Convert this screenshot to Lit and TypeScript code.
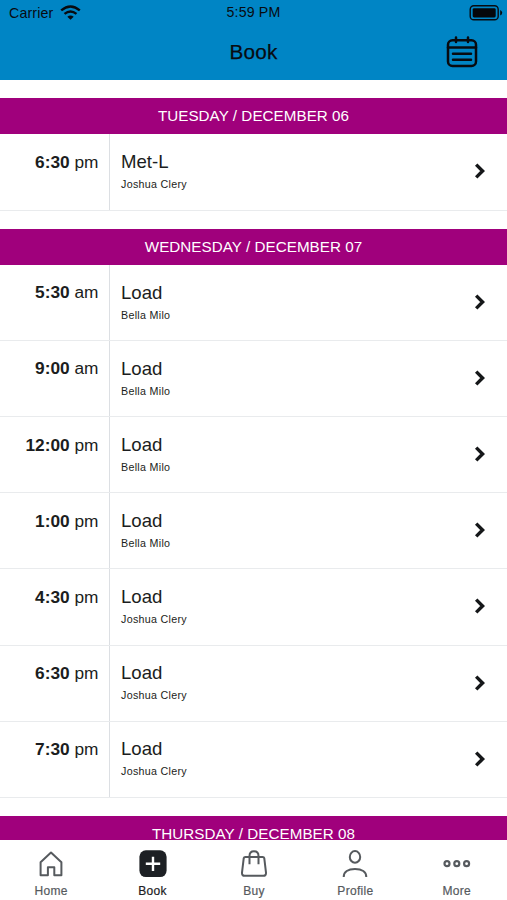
import { LitElement, html, css, svg } from "lit";
import { customElement, property } from "lit/decorators.js";

interface Slot { time: string; half: string; title: string; coach: string; }
interface Day { label: string; slots: Slot[]; }

const load = (time: string, half: string, coach: string): Slot => ({ time, half, title: "Load", coach });

const days: Day[] = [
  { label: "TUESDAY / DECEMBER 06", slots: [{ time: "6:30", half: "pm", title: "Met-L", coach: "Joshua Clery" }] },
  {
    label: "WEDNESDAY / DECEMBER 07",
    slots: [
      load("5:30", "am", "Bella Milo"),
      load("9:00", "am", "Bella Milo"),
      load("12:00", "pm", "Bella Milo"),
      load("1:00", "pm", "Bella Milo"),
      load("4:30", "pm", "Joshua Clery"),
      load("6:30", "pm", "Joshua Clery"),
      load("7:30", "pm", "Joshua Clery"),
    ],
  },
  { label: "THURSDAY / DECEMBER 08", slots: [] },
];

const tabs = [
  { label: "Home", icon: svg`<path d="M4.6 25.2V12.2L15 2.6 25.4 12.2V25.2H18.3V17.2H11.9V25.2Z" stroke-linejoin="round"/>` },
  { label: "Book", active: true, icon: svg`<rect x="1.4" y="0.3" width="27.2" height="26.8" rx="6.5" fill="#1d2024" stroke="none"/><path d="M15 6.7V20.9M7.8 13.8H22.2" stroke="#fff" stroke-width="2.4"/>` },
  { label: "Buy", icon: svg`<path d="M6.4 7H23.6Q25 7 25.3 8.3L27 22.6Q27.2 25.8 24.4 25.8H5.6Q2.8 25.8 3 22.6L4.7 8.3Q5 7 6.4 7Z"/><path d="M10.5 14.2V6Q10.5 1.3 15 1.3T19.5 6V14.2"/>` },
  { label: "Profile", icon: svg`<ellipse cx="15" cy="6.9" rx="5.2" ry="5.8"/><path d="M3.7 27C3.7 22 8 19.1 15 19.1S26.3 22 26.3 27"/>` },
  { label: "More", icon: svg`<g stroke-width="2.2"><circle cx="5" cy="13.7" r="2.5"/><circle cx="14.8" cy="13.7" r="2.5"/><circle cx="24.6" cy="13.7" r="2.5"/></g>` },
];

@customElement("class-row")
export class ClassRow extends LitElement {
  @property({ attribute: false }) slotData!: Slot;

  static styles = css`
    :host { display: flex; box-sizing: border-box; height: 76.15px; border-bottom: 1px solid #e9ebed; color: #1b1d20; }
    .time { box-sizing: border-box; width: 110px; padding: 17.3px 10.5px 0 0; border-right: 1px solid #dcdfe3; text-align: right; font-size: 17.3px; line-height: 20px; white-space: nowrap; }
    .info { flex: 1; padding: 17.7px 0 0 11px; }
    .title { font-size: 18.6px; line-height: 20px; }
    .coach { margin-top: 6px; font-size: 10.7px; line-height: 13px; letter-spacing: 0.3px; }
    .chevron { align-self: center; width: 12px; height: 18px; margin: 0 21px 1.4px 0; fill: none; stroke: #151719; stroke-width: 3.4; }
  `;

  render() {
    const s = this.slotData;
    return html`
      <div class="time"><b>${s.time}</b> ${s.half}</div>
      <div class="info"><div class="title">${s.title}</div><div class="coach">${s.coach}</div></div>
      <svg class="chevron" viewBox="0 0 12 18"><path d="M2.2 2.6 8.6 9 2.2 15.4" /></svg>
    `;
  }
}

@customElement("app-root")
export class AppRoot extends LitElement {
  static styles = css`
    :host { display: flex; flex-direction: column; height: 900px; overflow: hidden; background: #fff; font-family: "Liberation Sans", Arial, sans-serif; }
    .header { flex: none; height: 80px; background: #0085c5; color: #080b10; }
    .status { display: grid; grid-template-columns: 1fr auto 1fr; height: 25px; padding: 0 4px 0 9px; font-size: 14.2px; line-height: 24px; letter-spacing: 0.15px; }
    .carrier { display: flex; gap: 7px; padding-top: 1px; }
    .clock { padding-right: 5px; }
    .wifi { width: 21px; height: 15px; margin-top: 4px; }
    .battery { justify-self: end; width: 34px; height: 16px; margin-top: 5px; }
    .bar { display: grid; grid-template-columns: 1fr auto 1fr; align-items: center; height: 54px; }
    .heading { font-size: 20.7px; letter-spacing: 0.2px; -webkit-text-stroke: 0.25px #080b10; }
    .calendar { justify-self: end; width: 32px; height: 32px; margin-right: 29px; fill: none; stroke: #080b10; stroke-width: 2.5; stroke-linecap: round; }
    .list { flex: 1; min-height: 0; overflow: hidden; }
    .day { padding-top: 18.4px; }
    .band { height: 36px; background: #a0007c; color: #fff; text-align: center; font-size: 15.2px; line-height: 36px; letter-spacing: 0.05px; }
    .tabs { display: grid; grid-template-columns: repeat(5, 1fr); flex: none; height: 60px; background: #fff; }
    .tab { display: flex; flex-direction: column; align-items: center; padding: 10px 0 0 1px; color: #565a5e; font-size: 12px; line-height: 14px; letter-spacing: 0.3px; -webkit-text-stroke: 0.2px currentColor; }
    .active { color: #1d2024; }
    .icon { width: 30px; height: 28px; margin-bottom: 6px; fill: none; stroke: #565a5e; stroke-width: 2; }
  `;

  render() {
    return html`
      <header class="header">
        <div class="status">
          <div class="carrier">
            <span>Carrier</span>
            <svg class="wifi" viewBox="0 0 21 15" fill="none" stroke="#080b10" stroke-width="2.4">
              <path d="M1.2 5.4Q10.5-2.4 19.8 5.4M4.5 8.9Q10.5 4.1 16.5 8.9" />
              <path d="M10.5 14.8 7.3 11.8Q10.5 9.3 13.7 11.8Z" fill="#080b10" stroke="none" />
            </svg>
          </div>
          <div class="clock">5:59 PM</div>
          <svg class="battery" viewBox="0 0 34 16">
            <rect x="1.2" y="0.8" width="28" height="14" rx="3.6" fill="none" stroke="#080b10" stroke-width="1.4" />
            <rect x="3.7" y="3.2" width="23" height="9.2" rx="1.4" fill="#05070b" />
            <path d="M31.2 5V10.6Q33.2 9.7 33.2 7.8T31.2 5Z" fill="#080b10" />
          </svg>
        </div>
        <div class="bar">
          <span></span>
          <span class="heading">Book</span>
          <svg class="calendar" viewBox="0 0 32 32">
            <rect x="2" y="4.2" width="28" height="25.8" rx="4.5" />
            <path d="M2 11.5H30M10 1.6V6M22 1.6V6M7 17.8H25M7 23.8H25" />
          </svg>
        </div>
      </header>
      <main class="list">
        ${days.map((d) => html`
          <section class="day">
            <div class="band">${d.label}</div>
            ${d.slots.map((s) => html`<class-row .slotData=${s}></class-row>`)}
          </section>`)}
      </main>
      <nav class="tabs">
        ${tabs.map((t) => html`
          <div class="tab ${t.active ? "active" : ""}">
            <svg class="icon" viewBox="0 0 30 28">${t.icon}</svg>
            <span>${t.label}</span>
          </div>`)}
      </nav>
    `;
  }
}
